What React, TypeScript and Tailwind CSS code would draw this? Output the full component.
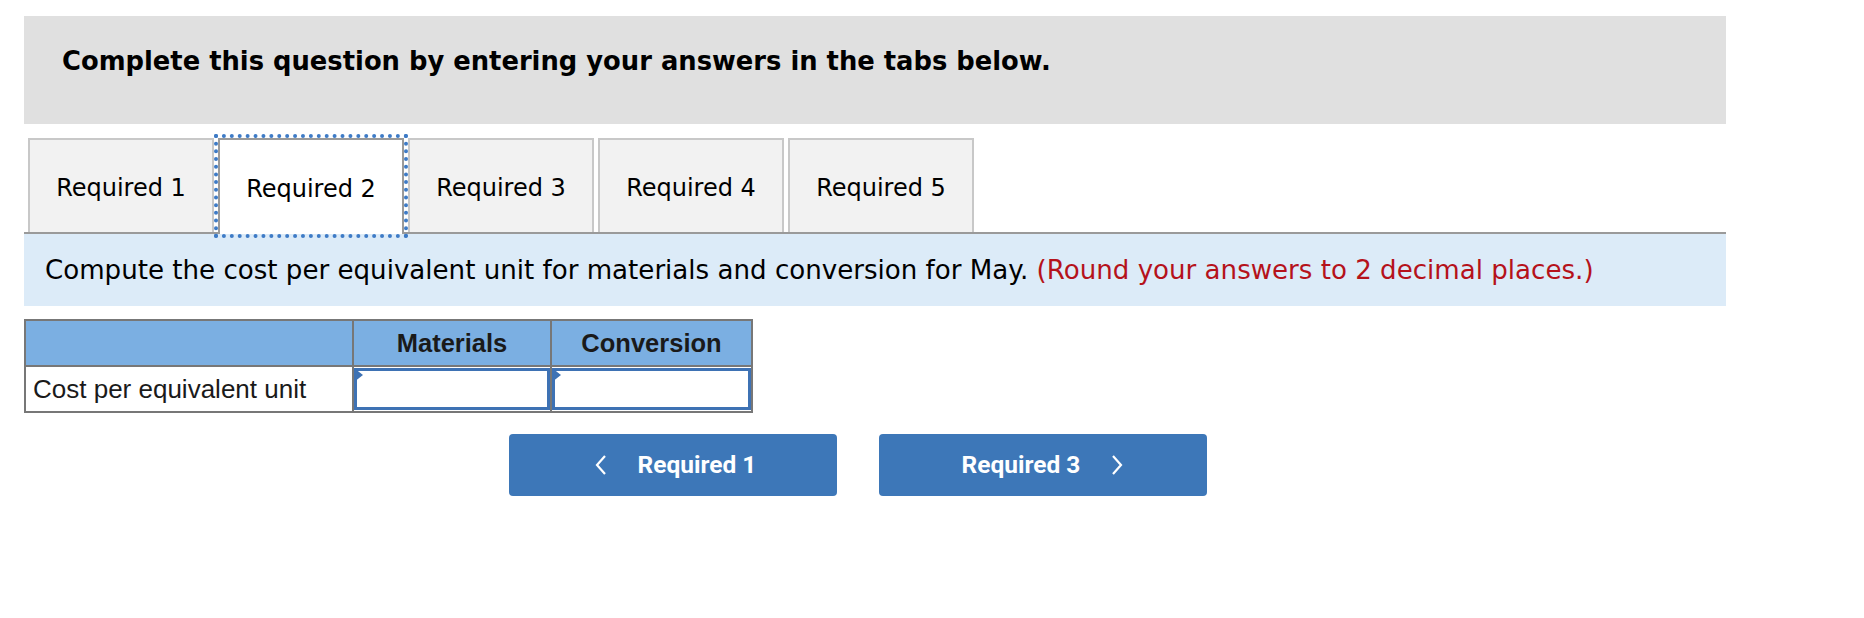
import React from "react";

const tabs = ["Required 1", "Required 2", "Required 3", "Required 4", "Required 5"];

function InputCell() {
  return (
    <td className="p-0 border-2 border-[#777777] bg-white">
      <div className="relative h-[42px] border-[3px] border-[#3e72b4] bg-white">
        <div className="absolute left-[-3px] top-[-3px] w-0 h-0 border-t-[7px] border-b-[7px] border-l-[9px] border-t-transparent border-b-transparent border-l-[#3e72b4]" />
      </div>
    </td>
  );
}

export default function App() {
  return (
    <div className="w-[1864px] h-[618px] bg-white pt-[16px] pl-[24px]" style={{ fontFamily: "'DejaVu Sans', Verdana, sans-serif" }}>
      <div className="w-[1702px]">
        <div className="h-[108px] bg-[#e0e0e0] pl-[38px] pt-[29px]">
          <div className="text-[25.8px] leading-[32px] font-bold text-black">
            Complete this question by entering your answers in the tabs below.
          </div>
        </div>

        <div className="mt-[14px] flex gap-[4px] pl-[4px] border-b-2 border-[#9a9a9a] h-[96px]">
          {tabs.map((t, i) =>
            i === 1 ? (
              <div
                key={t}
                className="w-[186px] h-[96px] bg-white border-2 border-b-0 border-[#9a9a9a] outline-[4px] outline-dotted outline-[#3e7bc6] flex items-center justify-center text-[24px] text-black relative z-10"
              >
                <span className="mt-[4px]">{t}</span>
              </div>
            ) : (
              <div
                key={t}
                className="w-[186px] h-[94px] bg-[#f2f2f2] border-2 border-b-0 border-[#c8c8c8] flex items-center justify-center text-[24px] text-black"
              >
                <span className="mt-[4px]">{t}</span>
              </div>
            )
          )}
        </div>

        <div className="h-[72px] bg-[#dcebf8] flex items-center pl-[21px] text-[26.1px] text-black">
          <span className="mt-[2px]">
            Compute the cost per equivalent unit for materials and conversion for May.{" "}
            <span className="text-[#b5121b]">(Round your answers to 2 decimal places.)</span>
          </span>
        </div>

        <table
          className="mt-[13px] border-collapse border-2 border-[#777777]"
          style={{ fontFamily: "'Liberation Sans', Arial, sans-serif" }}
        >
          <tbody>
            <tr className="h-[46px] bg-[#7bafe2]">
              <td className="w-[328px] border-2 border-[#777777]"></td>
              <td className="w-[198px] border-2 border-[#777777] text-center font-bold text-[25.5px] text-[#1a1a1a]">Materials</td>
              <td className="w-[201px] border-2 border-[#777777] text-center font-bold text-[25.5px] text-[#1a1a1a]">Conversion</td>
            </tr>
            <tr className="h-[46px] bg-white">
              <td className="border-2 border-[#777777] pl-[7px] text-[26px] text-[#1a1a1a]">Cost per equivalent unit</td>
              <InputCell />
              <InputCell />
            </tr>
          </tbody>
        </table>

        <div className="mt-[21px] ml-[485px] flex gap-[42px]" style={{ fontFamily: "Roboto, 'Liberation Sans', sans-serif" }}>
          <button className="w-[328px] h-[62px] bg-[#3d77b8] rounded-[4px] flex items-center justify-center text-white font-bold text-[24.5px]">
            <svg width="14" height="22" viewBox="0 0 14 22" className="mr-[30px] ml-[4px]">
              <path d="M11 2 L3 11 L11 20" fill="none" stroke="white" strokeWidth="2.2" />
            </svg>
            Required 1
          </button>
          <button className="w-[328px] h-[62px] bg-[#3d77b8] rounded-[4px] flex items-center justify-center text-white font-bold text-[24.5px]">
            Required 3
            <svg width="14" height="22" viewBox="0 0 14 22" className="ml-[30px]">
              <path d="M3 2 L11 11 L3 20" fill="none" stroke="white" strokeWidth="2.2" />
            </svg>
          </button>
        </div>
      </div>
    </div>
  );
}
